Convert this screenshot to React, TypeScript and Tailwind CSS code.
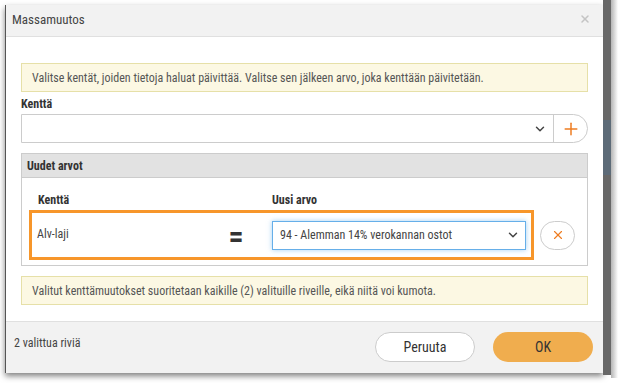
import { ChevronDown, Plus, X } from "lucide-react";

const font = { fontFamily: '"Roboto Condensed", "Liberation Sans Narrow", "DejaVu Sans Condensed", Roboto, sans-serif' };

const Notice: React.FC<{ text: string }> = ({ text }) => (
	<div className="h-[29px] flex items-center px-[10px] bg-[#fcf8e3] border border-[#e6e0a8] text-[12px] text-[#555]">
		{text}
	</div>
);

export default function App() {
	return (
		<div className="w-[618px] h-[383px] bg-white flex overflow-hidden" style={font}>
			<div className="pl-[5px] pt-[5px] flex">
				<div className="w-[598px] h-[368px] flex flex-col bg-white border-l border-[#555] shadow-[0_3px_6px_rgba(0,0,0,0.5)]">
					<div className="h-[32px] shrink-0 bg-[#f2f2f2] border-b border-[#e0e0e0] flex items-center justify-between pl-[6px] pr-[12px]">
						<span className="text-[13px] text-[#444] -mt-[2px]">Massamuutos</span>
						<X size={12} className="text-[#c4c4c4] -mt-[4px]" strokeWidth={3} />
					</div>
					<div className="flex-1 px-[15px] pt-[26px] flex flex-col">
						<Notice text="Valitse kentät, joiden tietoja haluat päivittää. Valitse sen jälkeen arvo, joka kenttään päivitetään." />
						<div className="mt-[2px] text-[12px] font-bold text-[#333] leading-[20px]">Kenttä</div>
						<div className="h-[29px] flex border border-[#ccc] rounded-r-full">
							<div className="flex-1 flex items-center justify-end pr-[6px]">
								<ChevronDown size={14} className="text-[#444]" strokeWidth={2.5} />
							</div>
							<div className="w-[34px] border-l border-[#ccc] flex items-center justify-center">
								<Plus size={20} className="text-[#ee7d22]" strokeWidth={1.8} />
							</div>
						</div>
						<div className="mt-[10px] border border-[#ccc]">
							<div className="h-[24px] bg-[#e2e2e2] border-b border-[#ccc] flex items-center px-[5px] text-[12px] font-bold text-[#333]">
								Uudet arvot
							</div>
							<div className="px-[7px] pt-[14px] pb-[5px]">
								<div className="flex text-[12px] font-bold text-[#333] leading-[16px]">
									<span className="w-[243px] pl-[9px]">Kenttä</span>
									<span>Uusi arvo</span>
								</div>
								<div className="flex items-center mt-[2px]">
									<div className="w-[505px] h-[50px] border-[3px] border-[#f7962a] flex items-center">
										<span className="w-[180px] pl-[5px] text-[12px] text-[#444] self-start mt-[12px]">Alv-laji</span>
										<span className="w-[48px] text-center text-[30px] font-bold text-[#333] leading-none mt-[4px]">=</span>
										<div className="ml-[12px] w-[254px] h-[29px] border border-[#66afe9] shadow-[0_0_5px_rgba(102,175,233,0.6)] flex items-center justify-between pl-[7px] pr-[5px] text-[12px] text-[#444]">
											<span>94 - Alemman 14% verokannan ostot</span>
											<ChevronDown size={14} className="text-[#444]" strokeWidth={2.5} />
										</div>
									</div>
									<div className="ml-[6px] w-[35px] h-[29px] rounded-full border border-[#ccc] flex items-center justify-center">
										<X size={14} className="text-[#ee7d22]" strokeWidth={2} />
									</div>
								</div>
							</div>
						</div>
						<div className="mt-[10px]">
							<Notice text="Valitut kenttämuutokset suoritetaan kaikille (2) valituille riveille, eikä niitä voi kumota." />
						</div>
					</div>
					<div className="h-[52px] shrink-0 bg-[#f2f2f2] border-t border-[#e0e0e0] flex items-start pl-[8px] pr-[10px] pt-[10px]">
						<span className="flex-1 text-[12px] text-[#444] mt-[2px]">2 valittua riviä</span>
						<button className="w-[100px] h-[30px] rounded-full bg-white border border-[#ccc] text-[14px] text-[#333]">Peruuta</button>
						<button className="ml-[18px] w-[100px] h-[30px] rounded-full bg-[#f0ad4e] text-[14px] text-[#333]">OK</button>
					</div>
				</div>
			</div>
			<div className="w-[8px] h-[375px] bg-[#686868] flex flex-col">
				<div className="h-[120px]" />
				<div className="h-[55px] bg-[#5d6b78]" />
			</div>
			<div className="w-[7px] h-[378px] bg-gradient-to-r from-[#b5b5b5] to-white" />
		</div>
	);
}
